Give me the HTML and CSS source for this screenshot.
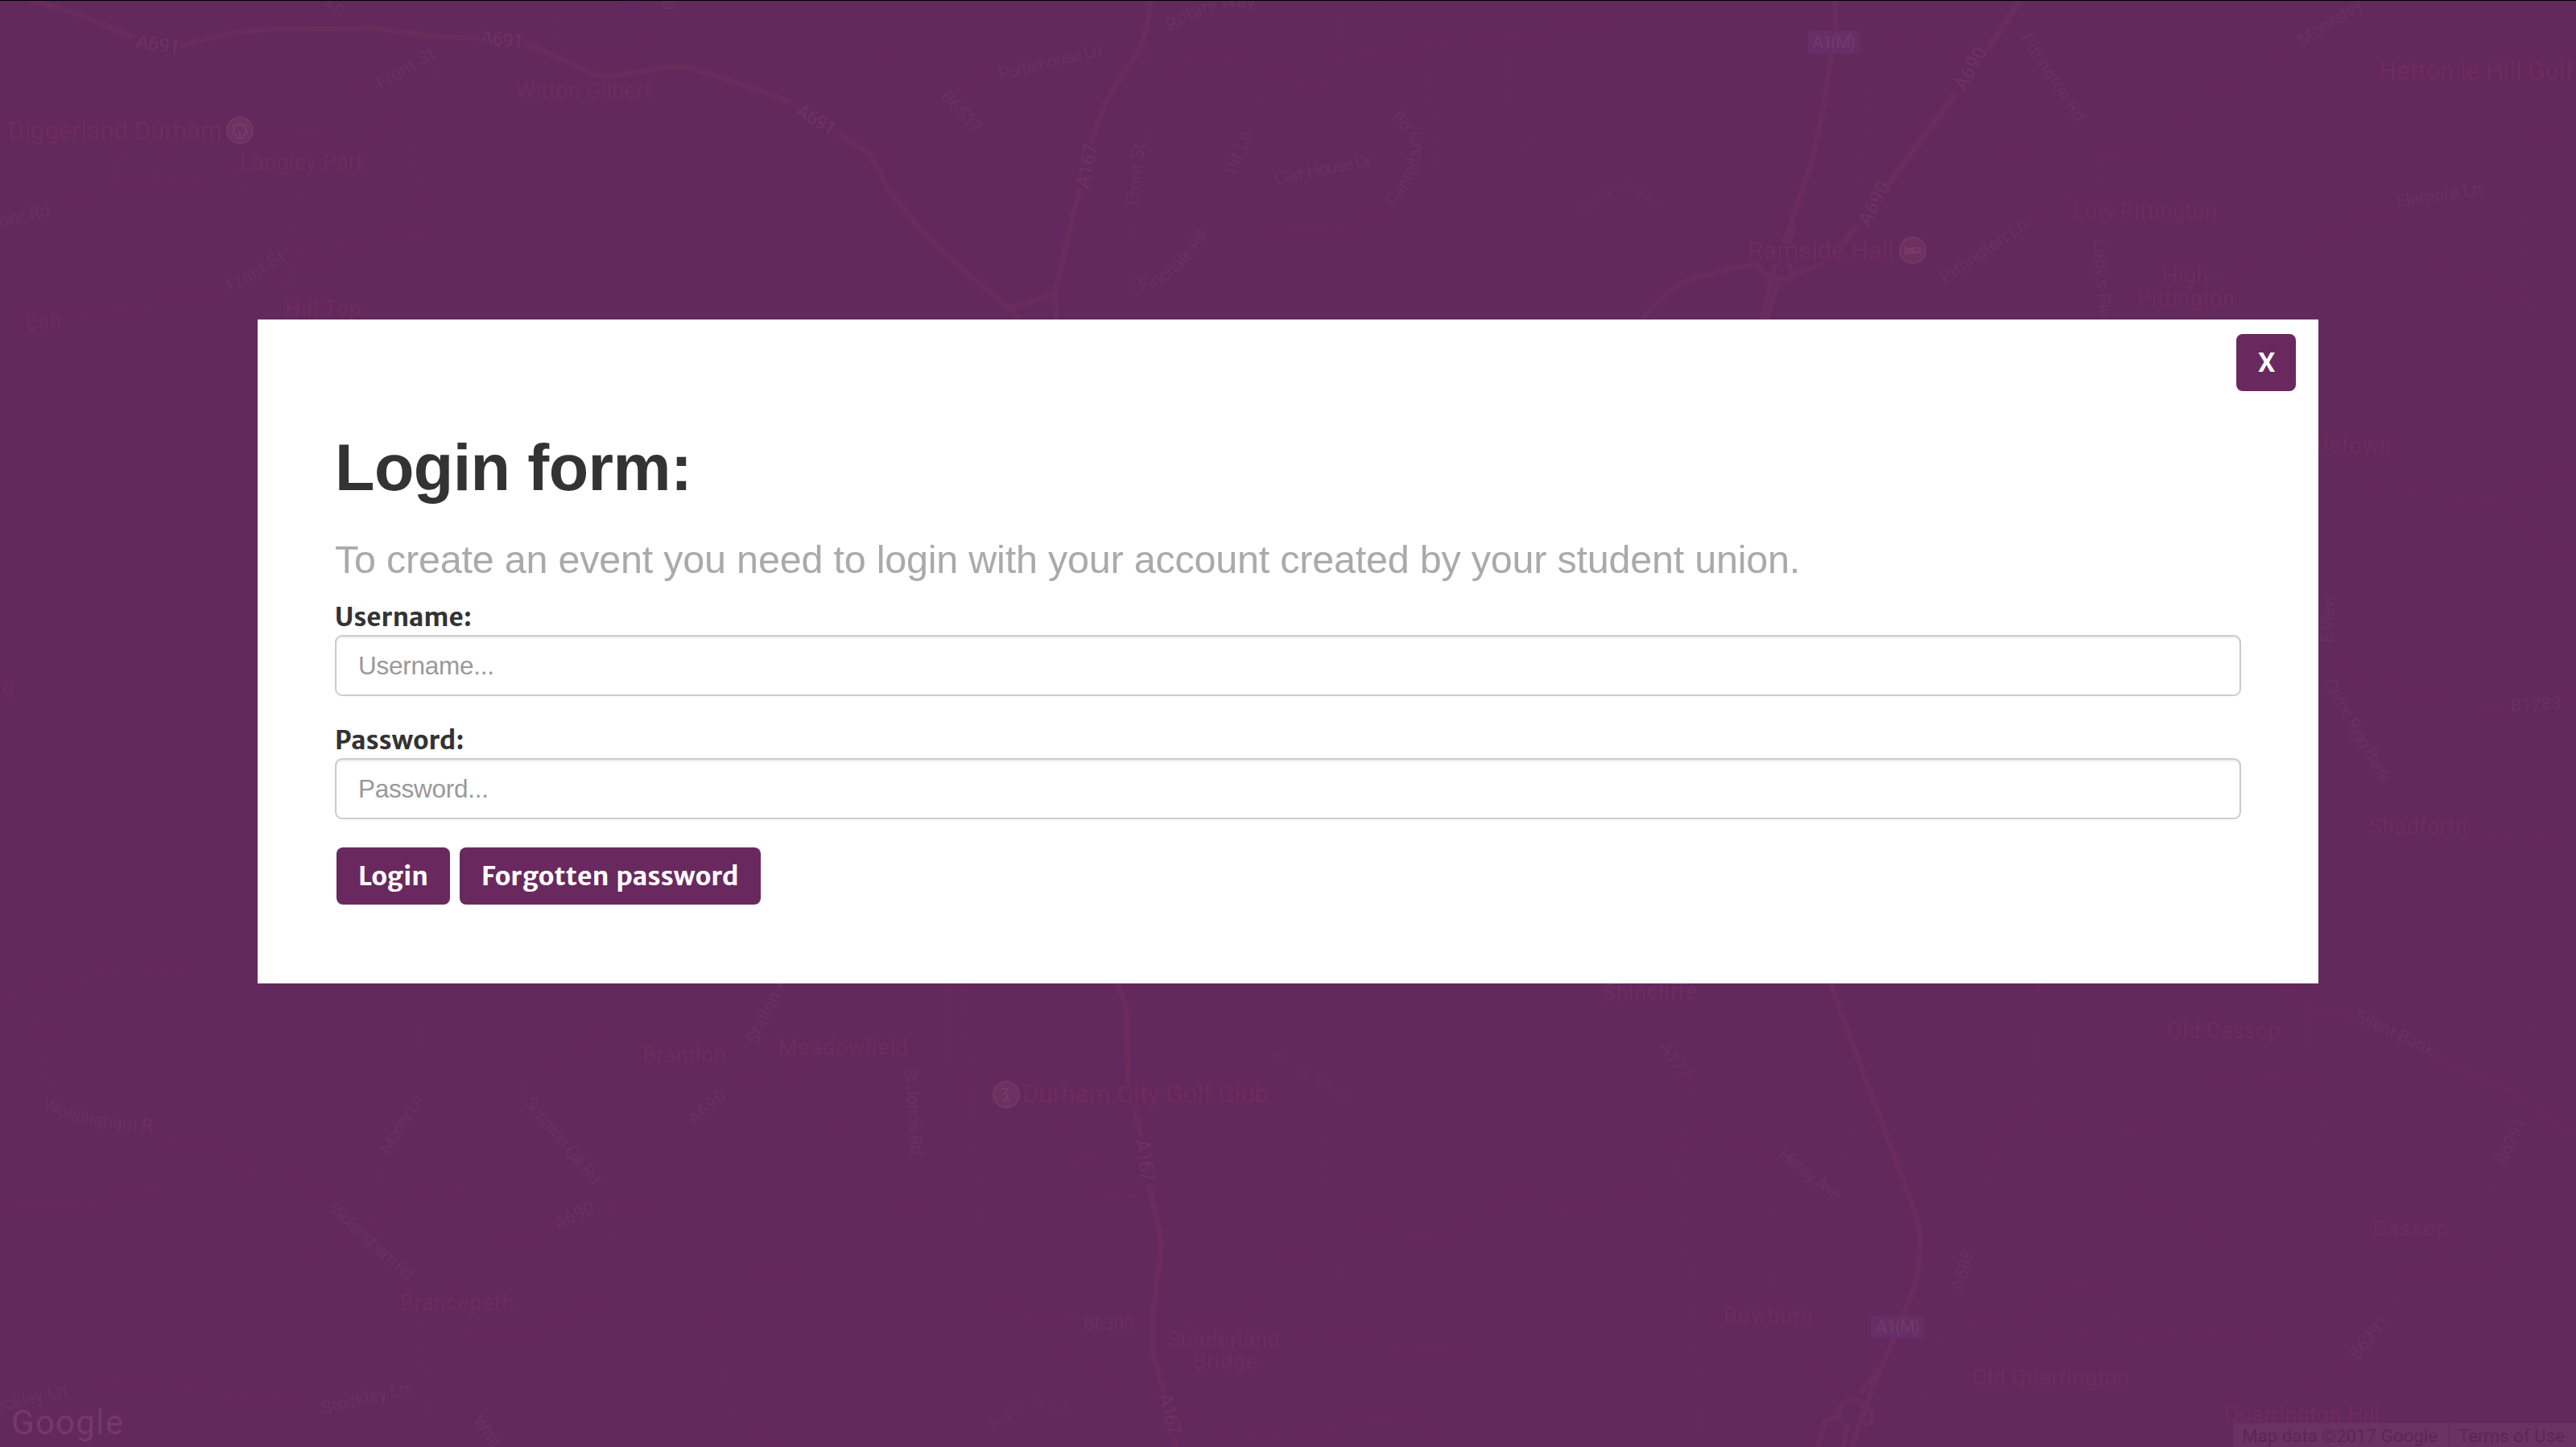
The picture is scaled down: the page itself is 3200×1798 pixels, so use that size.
FILE: index.html
```html
<!DOCTYPE html>
<html lang="en">
<head>
  <meta charset="UTF-8">
  <meta name="viewport" content="width=device-width, initial-scale=1.0">
  <title>Login</title>
  <link rel="stylesheet" href="styles.css">
</head>
<body>
  <!-- Map behind the overlay -->
  <svg class="map" viewBox="0 0 3200 1798" aria-hidden="true">
    <defs>
      <path id="canterbury" d="M1730 257Q1762 225 1765 190Q1764 160 1742 138"/>
      <path id="rotary" d="M1456 40Q1490 8 1556 9"/>
      <path id="finchale" d="M1418 363Q1476 345 1502 283"/>
      <path id="wear-north" d="M1968 273Q2010 215 2060 263"/>
      <path id="wear-south" d="M1235 1778Q1285 1730 1331 1764"/>
      <path id="wolsingham" d="M52 1379Q110 1402 184 1406"/>
    </defs>

    <g class="minor">
      <path d="M1064 7L1100 60L1155 103M1218 163L1285 240L1312 330L1345 380M1180 110L1240 92M1120 190L1078 185L1150 110"/>
      <path d="M1430 60L1426 178M1412 258L1403 397M1575 100L1560 160M1535 218L1530 235L1495 290M1530 235L1575 282Q1620 295 1700 275L1730 258"/>
      <path d="M1430 92Q1500 60 1575 85Q1620 115 1663 100L1660 10M1663 71L1740 62L1810 50L1900 45L2005 22L2028 0"/>
      <path d="M1712 2L1770 80Q1790 170 1775 230L1720 310L1655 397M1870 50L1880 150L1900 172L1893 205"/>
      <path d="M2365 50L2350 51L2322 110L2310 240M2365 50L2412 47L2446 73M2500 27L2515 48M2588 152L2605 193L2654 192Q2690 180 2710 143L2800 87L2842 57"/>
      <path d="M2374 393L2414 353M2517 283L2563 247L2620 253M2605 193L2607 240L2563 247L2528 195L2470 180"/>
      <path d="M2740 347L2759 347L2823 323L2921 277L2977 257M3086 233L3138 187L3200 143M2977 257L3000 300L3060 343L3145 380M3105 233L3135 270L3130 330L3145 397"/>
      <path d="M2883 530L2948 599L2983 609L3098 626L3200 699M3098 626L3200 575M2883 819L2933 839L3025 873L3117 877M3182 872L3200 867"/>
      <path d="M3110 930L3118 960L3100 1000L3142 1110L3200 1180M3065 1037L3140 1044L3185 1030L3200 1000M2958 973L3000 1010"/>
      <path d="M70 257L140 236L195 228L320 212M140 236V190H160M195 228V200L230 192M300 225L340 320L365 380L390 385M375 205L360 305L368 395M485 205L540 260L515 310M366 312L440 305L470 297L525 291"/>
      <path d="M405 185L430 120L468 112M405 168L330 167V140M430 157L470 163L500 150L537 100L540 60M50 395L140 385L250 370L280 360M351 340L380 335L440 310M500 155L530 270"/>
      <path d="M683 10L695 60L760 70L820 50L830 20M0 1240L60 1225L155 1202L225 1207L275 1200M30 1270L75 1283L200 1283M45 1260L65 1370"/>
      <path d="M186 1408L281 1431L414 1490M281 1431L315 1457L270 1482L180 1480L120 1495L0 1497M475 1230L523 1275L520 1320L531 1352M474 1438L470 1490L465 1520L540 1482L580 1473L628 1540M443 1532L380 1568"/>
      <path d="M1010 1314L905 1356M852 1402L765 1492L738 1505M691 1524L624 1545L554 1608M526 1631L519 1658L530 1715L525 1798"/>
      <path d="M765 1492L760 1540L748 1580L770 1650M765 1492Q820 1500 834 1530L850 1610L880 1640L910 1760L970 1798M880 1640L935 1585L1000 1585M560 1650L640 1665L700 1640L755 1612M84 1724L182 1711L231 1726L396 1741"/>
      <path d="M975 1339L1059 1410L1092 1454L1103 1482L1176 1528L1236 1614L1274 1635L1345 1640M1197 1223L1218 1524L1239 1581L1281 1639L1350 1700L1440 1740M655 1370L655 1340L700 1305L760 1280M1180 1223L1180 1330L1197 1338"/>
      <path d="M1345 1480L1380 1485L1420 1487M1290 1435L1305 1408L1325 1410L1340 1438L1370 1438M1338 1440L1335 1465L1315 1485M1409 1640L1420 1635M1460 1757L1540 1780Q1620 1785 1700 1763Q1760 1757 1840 1798"/>
      <path d="M1625 1356L1655 1387L1639 1436L1655 1513L1625 1551L1594 1560L1573 1597L1569 1623L1520 1647L1465 1643M1600 1655L1720 1670L1810 1678L1830 1690"/>
      <path d="M1660 1600L1662 1560L1684 1530L1702 1513Q1740 1545 1801 1534L1850 1505L1881 1475L1930 1509L1990 1495L2045 1472L2070 1430L2130 1402"/>
      <path d="M1980 1245L2035 1250L2062 1290M2095 1345L2145 1425L2197 1490L2200 1600L2250 1700L2285 1740M2104 1340L2085 1440L2100 1600L2115 1798M2145 1425L2205 1435"/>
      <path d="M2533 1223L2525 1372L2482 1421L2451 1543M2426 1608L2388 1745L2352 1783M2525 1372Q2560 1410 2600 1400L2660 1404Q2690 1390 2720 1355L2830 1335H2867M2595 1405L2645 1485L2710 1510L2772 1560L2815 1640L2850 1725"/>
      <path d="M2310 1370L2290 1440L2270 1470M2380 1498L2450 1465L2490 1395M2430 1653L2520 1633Q2550 1595 2590 1597Q2625 1605 2625 1640Q2640 1670 2665 1665L2710 1650L2820 1665M2430 1712L2455 1703M2500 1690L2570 1660L2630 1645"/>
      <path d="M2865 1253L2870 1320L2885 1370L2878 1460M3117 1356L3175 1200M3104 1450L3095 1480L3070 1530L3000 1580L2975 1600L2970 1638M2924 1690L2865 1725L2850 1750M3000 1580L3030 1590L3115 1565L3145 1620"/>
    </g>
    <g class="minor wide">
      <path d="M2833 1223L2865 1253L2924 1263M3019 1311L3117 1356L3200 1414"/>
    </g>

    <g class="area">
      <path d="M1450 192L1490 190L1505 215L1520 240L1510 290L1495 290L1485 235L1450 212ZM1297 235L1340 228L1328 335L1305 335Z"/>
      <path d="M765 0H800V46H775ZM260 180L285 185L290 215L260 222ZM310 240H328V275H312Z"/>
      <path d="M2570 1515L2660 1503L2718 1520L2630 1538ZM2843 1448L2880 1465L2950 1500L2960 1530L2900 1520ZM2895 1550Q2930 1530 2965 1550Q2950 1580 2895 1585Z"/>
      <path d="M2310 1570L2365 1540L2355 1620L2290 1655ZM2240 1655L2300 1680L2285 1740Z"/>
    </g>

    <g class="major">
      <path d="M38 0L98 18L168 47M224 57L274 44Q310 36 372 36L463 35L547 46L596 47M652 53L733 90Q750 98 768 93L828 84L852 83Q920 103 982 127M1042 167L1077 188Q1090 205 1100 230L1141 283L1183 323L1253 383L1267 397"/>
      <path d="M1429 0L1425 33L1416 60L1373 127L1355 178M1341 235L1310 365L1312 397M1310 365L1253 383"/>
      <path d="M2280 0V38M2275 67L2266 130L2251 200L2216 303M2205 327L2188 397M2228 280L2222 303M2210 345L2195 397"/>
      <path d="M2039 397Q2090 340 2121 342Q2150 330 2184 330L2196 345L2218 347L2230 340L2220 327M2230 340L2265 327"/>
      <path d="M1389 1223L1399 1250L1401 1345M1409 1375L1418 1414M1427 1471L1443 1543L1432 1635V1681L1446 1730M1460 1787V1798"/>
      <path d="M2274 1223L2377 1501Q2387 1530 2384 1551Q2386 1590 2363 1635M2353 1663L2328 1719L2300 1798M2335 1700L2310 1732M2290 1798L2295 1770M2303 1738Q2280 1745 2285 1760L2268 1764L2258 1798M2303 1738L2325 1755Q2330 1770 2315 1770"/>
    </g>
    <g class="major thick">
      <path d="M2510 0L2468 63M2430 115L2345 230M2307 280L2289 303"/>
    </g>

    <g class="road">
      <text transform="translate(168 59) rotate(9)" textLength="55">A691</text>
      <text transform="translate(596 54) rotate(7)" textLength="54">A691</text>
      <text transform="translate(987 142) rotate(31)" textLength="53">A691</text>
      <text transform="translate(1352 235) rotate(-78)" textLength="56">A167</text>
      <text transform="translate(2440 114) rotate(-60)" textLength="58">A690</text>
      <text transform="translate(2321 282) rotate(-61)" textLength="58">A690</text>
      <text transform="translate(1411 1417) rotate(82)" textLength="53">A167</text>
      <text transform="translate(1439 1734) rotate(76)" textLength="52">A167</text>
    </g>
    <g class="street">
      <text transform="translate(404 6) rotate(35)">Ln</text>
      <text transform="translate(839 13) rotate(-90)">B</text>
      <text transform="translate(473 112) rotate(-31)" textLength="80">Front St</text>
      <text transform="translate(287 364) rotate(-31)" textLength="80">Front St</text>
      <text transform="translate(63 268) rotate(-13)" text-anchor="end">Moor Rd</text>
      <text transform="translate(1242 100) rotate(-14)" textLength="132">Potterhouse Ln</text>
      <text><textPath href="#rotary">Rotary Way</textPath></text>
      <text transform="translate(1167 121) rotate(46)" textLength="64">B6532</text>
      <text transform="translate(1414 256) rotate(-84)" textLength="78">Front St</text>
      <text transform="translate(1536 218) rotate(-70)" textLength="56">Pit Ln</text>
      <text transform="translate(1585 229) rotate(-11)" textLength="122">Carr House Dr</text>
      <text><textPath href="#canterbury">Canterbury Rd</textPath></text>
      <text><textPath href="#finchale">Finchale Rd</textPath></text>
      <text transform="translate(2509 48) rotate(56)" textLength="126">Pittington Rd</text>
      <text transform="translate(2416 353) rotate(-34)" textLength="126">Pittington Ln</text>
      <text transform="translate(2860 58) rotate(-32)">Moorsley</text>
      <text transform="translate(2978 258) rotate(-9)" textLength="107">Elemore Ln</text>
      <text transform="translate(2601 298) rotate(86)">Lady's Piece Ln</text>
      <text transform="translate(2898 799) rotate(-88)" textLength="60">E View</text>
      <text transform="translate(2886 849) rotate(60)" textLength="144">Crime Rigg Bank</text>
      <text transform="translate(3119 884) rotate(-3)" textLength="63">B1283</text>
      <text transform="translate(940 1299) rotate(-65)">Station Ave</text>
      <text transform="translate(862 1399) rotate(-40)" textLength="54">A690</text>
      <text transform="translate(693 1528) rotate(-26)" textLength="52">A690</text>
      <text transform="translate(650 1371) rotate(50)" textLength="134">Scripton Gill Rd</text>
      <text transform="translate(483 1435) rotate(-58)" textLength="82">Morley Ln</text>
      <text><textPath href="#wolsingham">Wolsingham Rd</textPath></text>
      <text transform="translate(408 1504) rotate(42)" textLength="132">Wolsingham Rd</text>
      <text transform="translate(401 1757) rotate(-13)" textLength="112">Stockley Ln</text>
      <text transform="translate(84 1734) rotate(-13)" text-anchor="end">ockley Ln</text>
      <text transform="translate(586 1766) rotate(52)">Whit</text>
      <text transform="translate(1124 1327) rotate(86)" textLength="109">St John's Rd</text>
      <text transform="translate(1346 1652)" textLength="62">B6300</text>
      <text transform="translate(2061 1301) rotate(56)" textLength="50">A177</text>
      <text transform="translate(2208 1437) rotate(38)" textLength="92">Henry Ave</text>
      <text transform="translate(2438 1605) rotate(-74)" textLength="52">A688</text>
      <text transform="translate(2924 1268) rotate(25)" textLength="106">Silent Bank</text>
      <text transform="translate(3112 1449) rotate(-65)" textLength="62">B6291</text>
      <text transform="translate(2928 1691) rotate(-50)" textLength="64">B6291</text>
    </g>
    <g class="street river">
      <text><textPath href="#wear-north">River Wear</textPath></text>
      <text><textPath href="#wear-south">River Wear</textPath></text>
      <text transform="translate(1582 1314) rotate(32)" textLength="108">River Wear</text>
    </g>

    <g class="town">
      <text x="641" y="122" textLength="168">Witton Gilbert</text>
      <text x="298" y="211" textLength="158">Langley Park</text>
      <text x="354" y="393" textLength="95">Hill Top</text>
      <text x="31" y="409" textLength="46">Esh</text>
      <text x="18" y="864" text-anchor="end">g</text>
      <text x="2575" y="272" textLength="179">Low Pittington</text>
      <text x="2686" y="352" textLength="57">High</text>
      <text x="2655" y="380" textLength="121">Pittington</text>
      <text x="2971" y="563" text-anchor="end" textLength="128">Littletown</text>
      <text x="2943" y="1036" textLength="122">Shadforth</text>
      <text x="798" y="1320" textLength="104">Brandon</text>
      <text x="967" y="1311" textLength="161">Meadowfield</text>
      <text x="497" y="1628" textLength="141">Brancepeth</text>
      <text x="1450" y="1674" textLength="140">Sunderland</text>
      <text x="1482" y="1701" textLength="80">Bridge</text>
      <text x="1991" y="1242" textLength="117">Shincliffe</text>
      <text x="2692" y="1290" textLength="141">Old Cassop</text>
      <text x="2947" y="1536" textLength="94">Cassop</text>
      <text x="2141" y="1644" textLength="111">Bowburn</text>
      <text x="2450" y="1721" textLength="195">Old Quarrington</text>
      <text x="2763" y="1767" textLength="193">Quarrington Hill</text>
    </g>
    <g class="place">
      <text x="10" y="173" textLength="266">Diggerland Durham</text>
      <text x="2171" y="322" textLength="182">Ramside Hall</text>
      <text x="2955" y="99">Hetton le Hill Golf</text>
      <text x="1270" y="1370" textLength="306">Durham City Golf Club</text>
    </g>

    <g class="pin">
      <circle cx="298" cy="162" r="16"/>
      <circle cx="2376" cy="311" r="16"/>
      <circle cx="1250" cy="1360" r="16"/>
      <path d="M298 153L301 156L306 156L305 161L308 165L303 167L302 172H294L293 167L288 165L291 161L290 156L295 156ZM298 162V172"/>
      <path d="M2367 305V317M2367 314H2385V308M2371 309H2375V313H2371ZM2377 308H2385V313H2377Z"/>
      <path d="M1244 1353H1254M1252 1353L1248 1358L1252 1362L1246 1368M1250 1362L1253 1368M1255 1367V1368"/>
    </g>

    <g class="shield">
      <rect x="2246" y="38" width="65" height="29" rx="3"/>
      <text x="2251" y="60" textLength="54">A1(M)</text>
      <rect x="2324" y="1635" width="66" height="28" rx="3"/>
      <text x="2330" y="1656" textLength="55">A1(M)</text>
    </g>

    <text class="brand" x="14" y="1782" textLength="139">Google</text>
  </svg>

  <div class="attribution">
    <span>Map data ©2017 Google</span>
    <span>Terms of Use</span>
  </div>

  <div class="modal">
    <button type="button" class="btn close">X</button>
    <h1>Login form:</h1>
    <p class="lead">To create an event you need to login with your account created by your student union.</p>
    <form id="login-form">
      <div class="form-group">
        <label for="username">Username:</label>
        <input type="text" id="username" name="username" placeholder="Username...">
      </div>
      <div class="form-group">
        <label for="password">Password:</label>
        <input type="password" id="password" name="password" placeholder="Password...">
      </div>
      <div class="actions">
        <button type="submit" class="btn">Login</button>
        <button type="button" class="btn">Forgotten password</button>
      </div>
    </form>
  </div>
</body>
</html>
```

FILE: styles.css
```css
* {
    box-sizing: border-box;
}

body {
    position: relative;
    margin: 0;
    height: 1798px;
    padding-top: 396px;
    overflow: hidden;
    border-top: 1px solid #000000;
    background-color: #63285c;
    color: #333333;
    font-family: "Liberation Sans", Arial, sans-serif;
}

/* map */
.map {
    position: absolute;
    top: -1px;
    left: 0;
    width: 3200px;
    height: 1798px;
    font-family: Roboto, sans-serif;
    clip-path: inset(1px 0 0 0);
}

.minor {
    fill: none;
    stroke: #66295f;
    stroke-width: 3;
    stroke-linejoin: round;
}

.wide {
    stroke-width: 7;
}

.area {
    fill: #63295e;
}

.major {
    fill: none;
    stroke: #692c5c;
    stroke-width: 7;
    stroke-linejoin: round;
}

.thick {
    stroke-width: 9;
}

.road {
    font-size: 24px;
    fill: #6e3361;
}

.street {
    font-size: 22px;
    fill: #6a3062;
}

.river {
    fill: #652c63;
}

.town {
    font-size: 27px;
    fill: #6d2d5d;
}

.place {
    font-size: 31px;
    fill: #6f2c5d;
}

.pin circle {
    fill: #6e305f;
    stroke: #713967;
    stroke-width: 2;
}

.pin path {
    fill: none;
    stroke: #773c6c;
    stroke-width: 2;
}

.shield {
    font-size: 22px;
    font-weight: 500;
    fill: #713868;
}

.shield rect {
    fill: #672d66;
}

.brand {
    font-size: 42px;
    fill: #75386c;
}

.attribution {
    position: absolute;
    right: 0;
    bottom: 0;
    display: flex;
    height: 30px;
    line-height: 33px;
    font-family: Roboto, sans-serif;
    font-size: 22.3px;
    color: #5c2555;
}

.attribution span {
    padding: 0 14px 0 11px;
    background-color: #6c3163;
}

.attribution span + span {
    margin-left: 1px;
}

/* login box */
.modal {
    position: relative;
    width: 2560px;
    height: 825px;
    margin: 0 auto;
    padding: 134px 96px 0;
    background-color: #ffffff;
}

h1 {
    margin: 0 0 26px;
    font-size: 81px;
    line-height: 100px;
    letter-spacing: -0.6px;
}

.lead {
    margin: 0;
    font-size: 48.5px;
    line-height: 76px;
    letter-spacing: -0.22px;
    color: #aaaaaa;
}

#login-form {
    margin-top: -2px;
}

.form-group {
    margin-bottom: 19px;
}

label {
    display: block;
    height: 58px;
    padding-top: 14px;
    font-family: "Merriweather Sans", "Open Sans", sans-serif;
    font-size: 31.5px;
    font-weight: bold;
    line-height: 44px;
    letter-spacing: 0.15px;
}

input {
    display: block;
    width: 100%;
    height: 76px;
    padding: 0 27px;
    border: 2px solid #cccccc;
    border-radius: 9px;
    background-color: #ffffff;
    box-shadow: inset 0 2px 2px rgba(0, 0, 0, 0.075);
    font-family: inherit;
    font-size: 31.5px;
    letter-spacing: -0.25px;
    color: #555555;
}

input::placeholder {
    color: #999999;
}

.actions {
    display: flex;
    gap: 12px;
    padding: 16px 0 0 2px;
}

.btn {
    height: 71px;
    padding: 0 27px;
    border: none;
    border-radius: 8px;
    background-color: #69295f;
    color: #ffffff;
    font-family: "Merriweather Sans", "Open Sans", sans-serif;
    font-size: 32px;
    font-weight: bold;
    word-spacing: 3px;
    letter-spacing: 0.1px;
    cursor: pointer;
}

.close {
    position: absolute;
    top: 18px;
    right: 28px;
    width: 74px;
}
```
